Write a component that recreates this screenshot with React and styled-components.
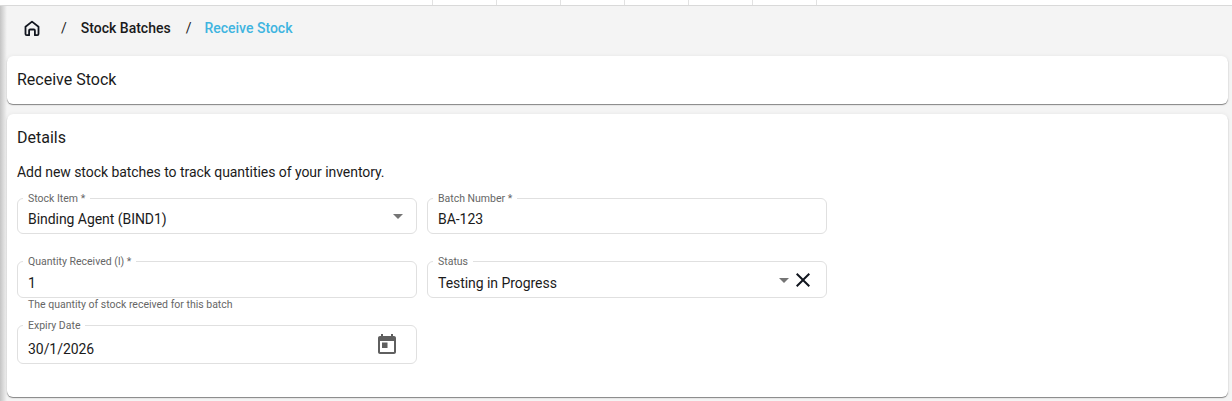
import React from "react"
import styled, { createGlobalStyle } from "styled-components"

const GlobalStyle = createGlobalStyle`
  html, body {
    margin: 0;
    padding: 0;
    background: #f4f4f4;
    font-family: Roboto, "Liberation Sans", sans-serif;
    color: #1b1b1b;
  }
  * { box-sizing: border-box; }
`

const TICK_COUNT = 7

const HomeIcon = () => (
  <svg width="16" height="17" viewBox="0 0 16 17" fill="none" stroke="#12161f" strokeWidth="1.8" strokeLinejoin="round">
    <path d="M1.5 6.8L8 1.6l6.5 5.2v7.2a1.2 1.2 0 0 1-1.2 1.2h-2.4V10.5a1 1 0 0 0-1-1H6.1a1 1 0 0 0-1 1v4.7H2.7a1.2 1.2 0 0 1-1.2-1.2z" />
  </svg>
)

const CalendarIcon = () => (
  <svg width="24" height="24" viewBox="0 0 24 24" fill="#5f5f5f">
    <path d="M19 4h-1V2h-2v2H8V2H6v2H5c-1.11 0-1.99.9-1.99 2L3 20c0 1.1.89 2 2 2h14c1.1 0 2-.9 2-2V6c0-1.1-.9-2-2-2zm0 16H5V9h14v11zM7 10.5h5.5V16H7z" />
  </svg>
)

const CloseIcon = () => (
  <CloseBox width="24" height="24" viewBox="0 0 24 24" fill="#12161f">
    <path d="M19 6.41L17.59 5 12 10.59 6.41 5 5 6.41 10.59 12 5 17.59 6.41 19 12 13.41 17.59 19 19 17.59 13.41 12 19 6.41z" />
  </CloseBox>
)

const Arrow = () => (
  <svg width="24" height="24" viewBox="0 0 24 24" fill="#757575">
    <path d="M7 10l5 5 5-5z" />
  </svg>
)

const App = () => (
  <>
    <GlobalStyle />
    <TopStrip>
      {Array.from({ length: TICK_COUNT }).map((_, i) => (
        <Tick key={i} />
      ))}
    </TopStrip>
    <Main>
      <Breadcrumbs>
        <HomeLink>
          <HomeIcon />
        </HomeLink>
        <Separator>/</Separator>
        <Crumb>Stock Batches</Crumb>
        <Separator>/</Separator>
        <Crumb $active>Receive Stock</Crumb>
      </Breadcrumbs>
      <TitleCard>
        <CardTitle>Receive Stock</CardTitle>
      </TitleCard>
      <DetailsCard>
        <CardTitle>Details</CardTitle>
        <Intro>Add new stock batches to track quantities of your inventory.</Intro>
        <FormGrid>
          <Field $height={36}>
            <Legend>Stock Item *</Legend>
            <Value>Binding Agent (BIND1)</Value>
            <Adornments $right={6}>
              <Arrow />
            </Adornments>
          </Field>
          <Field $height={36}>
            <Legend>Batch Number *</Legend>
            <Value>BA-123</Value>
          </Field>
          <div>
            <Field $height={37} $top={27}>
              <Legend>Quantity Received (l) *</Legend>
              <Value>1</Value>
            </Field>
            <Helper>The quantity of stock received for this batch</Helper>
          </div>
          <Field $height={37} $top={27}>
            <Legend>Status</Legend>
            <Value>Testing in Progress</Value>
            <Adornments $right={11}>
              <Arrow />
              <CloseIcon />
            </Adornments>
          </Field>
          <Field $height={39} $top={14}>
            <Legend>Expiry Date</Legend>
            <Value>30/1/2026</Value>
            <DateAdornment>
              <CalendarIcon />
            </DateAdornment>
          </Field>
        </FormGrid>
      </DetailsCard>
    </Main>
  </>
)

export default App

const TopStrip = styled.div`
  height: 6px;
  background: #fff;
  border-bottom: 1px solid #d9d9d9;
  display: flex;
  padding-left: 432px;
`
const Tick = styled.div`
  width: 64px;
  border-left: 1px solid #e2e2e2;
`
const Main = styled.main`
  height: 395px;
  padding: 0 4px 0 7px;
  background: linear-gradient(to right, #c4c4c4 0, #f4f4f4 7px);
`
const Breadcrumbs = styled.nav`
  height: 50px;
  display: flex;
  align-items: center;
  padding: 0 0 6px 17px;
  font-size: 14px;
  font-weight: 500;
`
const HomeLink = styled.span`
  display: flex;
  width: 16px;
`
const Separator = styled.span`
  margin: 0 14px 0 21px;
  font-weight: 400;
  & ~ & {
    margin-left: 15px;
    margin-right: 13px;
  }
`
const Crumb = styled.span`
  color: ${(p) => (p.$active ? "#3fb4e0" : "#1b1b1b")};
`
const TitleCard = styled.section`
  height: 48px;
  padding: 0 10px;
  display: flex;
  align-items: center;
  background: #fff;
  border-radius: 6px;
  box-shadow: 0 1px 1px rgba(0, 0, 0, 0.45), 0 0 4px rgba(0, 0, 0, 0.06);
`
const DetailsCard = styled.section`
  height: 283px;
  margin-top: 10px;
  padding: 14px 10px 0;
  background: #fff;
  border-radius: 6px;
  box-shadow: 0 1px 1px rgba(0, 0, 0, 0.45), 0 0 4px rgba(0, 0, 0, 0.06);
`
const CardTitle = styled.h2`
  margin: 0;
  font-size: 16px;
  font-weight: 400;
  line-height: 20px;
`
const Intro = styled.p`
  margin: 15px 0 0;
  font-size: 14px;
  line-height: 18px;
  letter-spacing: -0.05px;
`
const FormGrid = styled.div`
  display: grid;
  grid-template-columns: 400px 400px;
  column-gap: 10px;
  align-items: start;
  margin-top: 17px;
`
const Field = styled.div`
  position: relative;
  height: ${(p) => p.$height}px;
  margin-top: ${(p) => p.$top || 0}px;
  padding-left: 10px;
  display: flex;
  align-items: flex-end;
  border: 1px solid #e0e0e0;
  border-radius: 6px;
`
const Legend = styled.span`
  position: absolute;
  top: -7px;
  left: 5px;
  padding: 0 5px;
  background: #fff;
  color: #666;
  font-size: 10.5px;
  line-height: 13px;
`
const Value = styled.span`
  font-size: 14px;
  line-height: 20px;
  margin-bottom: 4px;
  letter-spacing: -0.05px;
`
const Adornments = styled.div`
  position: absolute;
  right: ${(p) => p.$right}px;
  top: 50%;
  transform: translateY(-50%);
  display: flex;
  align-items: center;
`
const CloseBox = styled.svg`
  margin-left: -5px;
`
const DateAdornment = styled.div`
  position: absolute;
  right: 17px;
  top: 6px;
  display: flex;
`
const Helper = styled.p`
  margin: 0;
  padding-left: 11px;
  color: #666;
  font-size: 10.5px;
  line-height: 13px;
`
